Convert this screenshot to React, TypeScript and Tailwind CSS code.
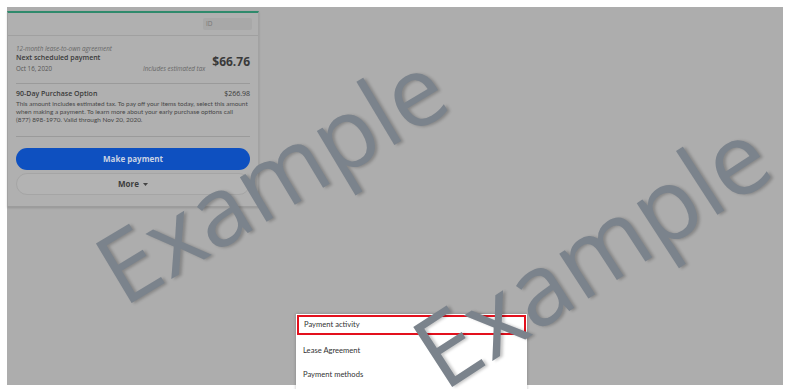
import React from 'react';

const menuItems = ['Payment activity', 'Lease Agreement', 'Payment methods'];

function Card() {
  return (
    <div className="w-[252px] mt-[4px] bg-[#b0b0b0] border-t-2 border-t-[#2f8a6c] border-x border-b border-x-[#a2a2a2] border-b-[#9c9c9c] shadow-[0_1px_2px_rgba(0,0,0,0.15)] font-['Open_Sans',sans-serif]">
      {/* header */}
      <div className="h-[23px] flex items-center justify-end pr-[6px] border-b border-[#a0a0a0]">
        <div className="w-[49px] h-[12px] rounded-[2px] bg-[#a8a8a8] flex items-center pl-[3px] text-[6.5px] text-[#777]">
          ID
        </div>
      </div>

      <div className="px-[8px] pt-[8px] pb-[11px]">
        {/* next payment */}
        <div className="flex items-end pb-[8px] border-b border-[#9a9a9a]">
          <div className="flex-1">
            <div className="text-[6.3px] italic text-[#666] leading-[9px]">12-month lease-to-own agreement</div>
            <div className="text-[7px] font-semibold text-[#3a3a3a] leading-[10px]">Next scheduled payment</div>
            <div className="text-[6.2px] text-[#555] leading-[12px]">Oct 16, 2020</div>
          </div>
          <div className="text-[6.3px] italic text-[#666] leading-[10px] mr-[7px] mb-[1px]">Includes estimated tax</div>
          <div className="text-[12px] font-bold text-[#3a3a3a] leading-[14px] self-center mt-[4px]">$66.76</div>
        </div>

        {/* purchase option */}
        <div className="pt-[5px] pb-[12px] border-b border-[#9a9a9a]">
          <div className="flex justify-between text-[7px] font-semibold text-[#3a3a3a] leading-[10px]">
            <span>90-Day Purchase Option</span>
            <span className="font-medium">$266.98</span>
          </div>
          <p className="mt-[1px] text-[6.4px] leading-[8px] text-[#474747] whitespace-nowrap font-['Lato',sans-serif]">
            This amount includes estimated tax. To pay off your items today, select this amount
            <br />
            when making a payment. To learn more about your early purchase options call
            <br />
            (877) 898-1970. Valid through Nov 20, 2020.
          </p>
        </div>

        {/* buttons */}
        <div className="mt-[11px] flex flex-col gap-[3px]">
          <button className="h-[22px] w-full rounded-full bg-[#0e50c0] text-[#c9d3e4] text-[8px] font-bold">
            Make payment
          </button>
          <button className="h-[22px] w-full rounded-full bg-[#b3b3b3] border border-[#a5a5a5] text-[#3d3d3d] text-[8px] font-bold flex items-center justify-center gap-[4px]">
            More
            <svg width="5" height="3" viewBox="0 0 5 3">
              <path d="M0 0h5L2.5 3z" fill="#444" />
            </svg>
          </button>
        </div>
      </div>
    </div>
  );
}

function Menu() {
  return (
    <div className="absolute left-[296px] top-[314px] w-[231px] h-[80px] bg-white shadow-[0_0_3px_rgba(0,0,0,0.25)] font-['Lato',sans-serif] text-[7.6px] text-[#333]">
      {menuItems.map((item, i) => (
        <div key={item} className="h-[24px]">
          {i === 0 ? (
            <div className="mx-[1px] mt-[1px] h-[20px] border-2 border-[#e3101d] flex items-center pl-[5px]">{item}</div>
          ) : (
            <div className="h-full flex items-center pl-[7px]">{item}</div>
          )}
        </div>
      ))}
    </div>
  );
}

function Watermark({ x, y, size, angle }: { x: number; y: number; size: number; angle: number }) {
  return (
    <div
      className="absolute whitespace-nowrap leading-none font-['Open_Sans',sans-serif] text-[#7b838c] [text-shadow:2px_2px_3px_rgba(0,0,0,0.22)] pointer-events-none"
      style={{ left: x, top: y, fontSize: size, transform: `translate(-50%, -50%) rotate(${angle}deg)` }}
    >
      Example
    </div>
  );
}

export default function App() {
  return (
    <div className="relative w-[787px] h-[389px] bg-white overflow-hidden">
      <div className="absolute left-[7px] top-[7px] w-[776px] h-[378px] bg-[#adadad]">
        <Card />
      </div>
      <Menu />
      <Watermark x={270} y={176} size={97} angle={-31} />
      <Watermark x={590} y={251} size={100} angle={-33} />
    </div>
  );
}
